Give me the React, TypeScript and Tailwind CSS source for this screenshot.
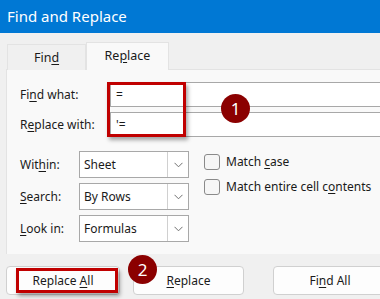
import type { ReactNode } from "react";

const font = { fontFamily: '"Noto Sans", "Segoe UI", sans-serif' };

function U({ children }: { children: ReactNode }) {
  return <span className="underline underline-offset-2">{children}</span>;
}

function Badge({ n }: { n: number }) {
  return (
    <div className="flex h-[29px] w-[29px] items-center justify-center rounded-full bg-[#8b0000] text-[17px] text-white">
      {n}
    </div>
  );
}

function Chevron() {
  return (
    <svg width="9" height="6" viewBox="0 0 9 6" fill="none">
      <path d="M0.5 0.8 L4.5 4.8 L8.5 0.8" stroke="#707070" strokeWidth="1" />
    </svg>
  );
}

function Select({ label, value }: { label: ReactNode; value: string }) {
  return (
    <div className="flex h-[27px] items-center">
      <div className="w-[59px]">{label}</div>
      <div className="flex h-[27px] w-[110px] items-center border border-[#a8a8a8] bg-white">
        <div className="flex-1 pl-[4px]">{value}</div>
        <div className="flex h-full w-[21px] items-center justify-center border-l border-[#d0d0d0]">
          <Chevron />
        </div>
      </div>
    </div>
  );
}

function Check({ label }: { label: ReactNode }) {
  return (
    <div className="flex h-[20px] items-center gap-[6px]">
      <div className="h-[16px] w-[16px] rounded-[3px] border border-[#8a8a8a] bg-[#f6f6f6]" />
      <div>{label}</div>
    </div>
  );
}

function Button({ children, w }: { children: ReactNode; w: string }) {
  return (
    <div
      className={`flex h-[29px] shrink-0 items-center justify-center rounded-[4px] border border-[#d0d0d0] bg-[#fdfdfd] ${w}`}
    >
      <span>{children}</span>
    </div>
  );
}

export default function App() {
  return (
    <div
      className="relative h-[299px] w-[380px] overflow-hidden bg-[#f0f0f0] text-[12px] text-[#1a1a1a]"
      style={font}
    >
      <div className="flex h-[33px] items-center bg-[#0078d4] pl-[7px] text-[15px] text-white">
        Find and Replace
      </div>

      <div className="relative z-10 -mb-px flex h-[37px] items-end pl-[7px] text-[12.5px]">
        <div className="flex h-[26px] w-[79px] items-center justify-center border border-b-0 border-[#e3e3e3] bg-[#f0f0f0] pt-[2px]">
          <span>
            Fin<U>d</U>
          </span>
        </div>
        <div className="flex h-[28px] w-[83px] items-center justify-center border border-b-0 border-[#e3e3e3] bg-[#f9f9f9]">
          <span>
            Re<U>p</U>lace
          </span>
        </div>
      </div>

      <div className="ml-[6px] h-[185px] border-l border-t border-[#e3e3e3] bg-[#f9f9f9] pl-[13px] pt-[12px]">
        <div className="flex flex-col gap-[5px]">
          <div className="flex h-[25px] items-center">
            <div className="w-[90px]">
              Fi<U>n</U>d what:
            </div>
            <div className="flex h-[25px] flex-1 items-center border-y border-l border-[#a8a8a8] bg-white pl-[5px]">
              =
            </div>
          </div>
          <div className="flex h-[25px] items-center">
            <div className="w-[90px]">
              R<U>e</U>place with:
            </div>
            <div className="flex h-[25px] flex-1 items-center border-y border-l border-[#a8a8a8] bg-white pl-[5px]">
              '=
            </div>
          </div>
        </div>

        <div className="mt-[14px] flex">
          <div className="flex flex-col gap-[5px]">
            <Select label={<>Wit<U>h</U>in:</>} value="Sheet" />
            <Select label={<><U>S</U>earch:</>} value="By Rows" />
            <Select label={<><U>L</U>ook in:</>} value="Formulas" />
          </div>
          <div className="ml-[15px] flex flex-col gap-[5px] pt-[1px]">
            <Check label={<>Match <U>c</U>ase</>} />
            <Check label={<>Match entire cell c<U>o</U>ntents</>} />
          </div>
        </div>
      </div>

      <div className="flex pl-[6px] pt-[12px]">
        <Button w="w-[114px]">
          Replace <U>A</U>ll
        </Button>
        <div className="ml-[13px] shrink-0">
          <Button w="w-[111px]">
            <U>R</U>eplace
          </Button>
        </div>
        <div className="ml-[29px] shrink-0">
          <Button w="w-[114px]">
            Fi<U>n</U>d All
          </Button>
        </div>
      </div>

      {/* annotation overlays */}
      <div className="pointer-events-none absolute left-[107px] top-[82px] h-[55px] w-[79px] border-[3px] border-[#c00000] shadow-[2px_3px_4px_rgba(0,0,0,0.35)]" />
      <div className="pointer-events-none absolute left-[16px] top-[268px] h-[25px] w-[102px] border-[3px] border-[#c00000] shadow-[2px_3px_4px_rgba(0,0,0,0.35)]" />
      <div className="absolute left-[221px] top-[94px]">
        <Badge n={1} />
      </div>
      <div className="absolute left-[128px] top-[255px]">
        <Badge n={2} />
      </div>
    </div>
  );
}
